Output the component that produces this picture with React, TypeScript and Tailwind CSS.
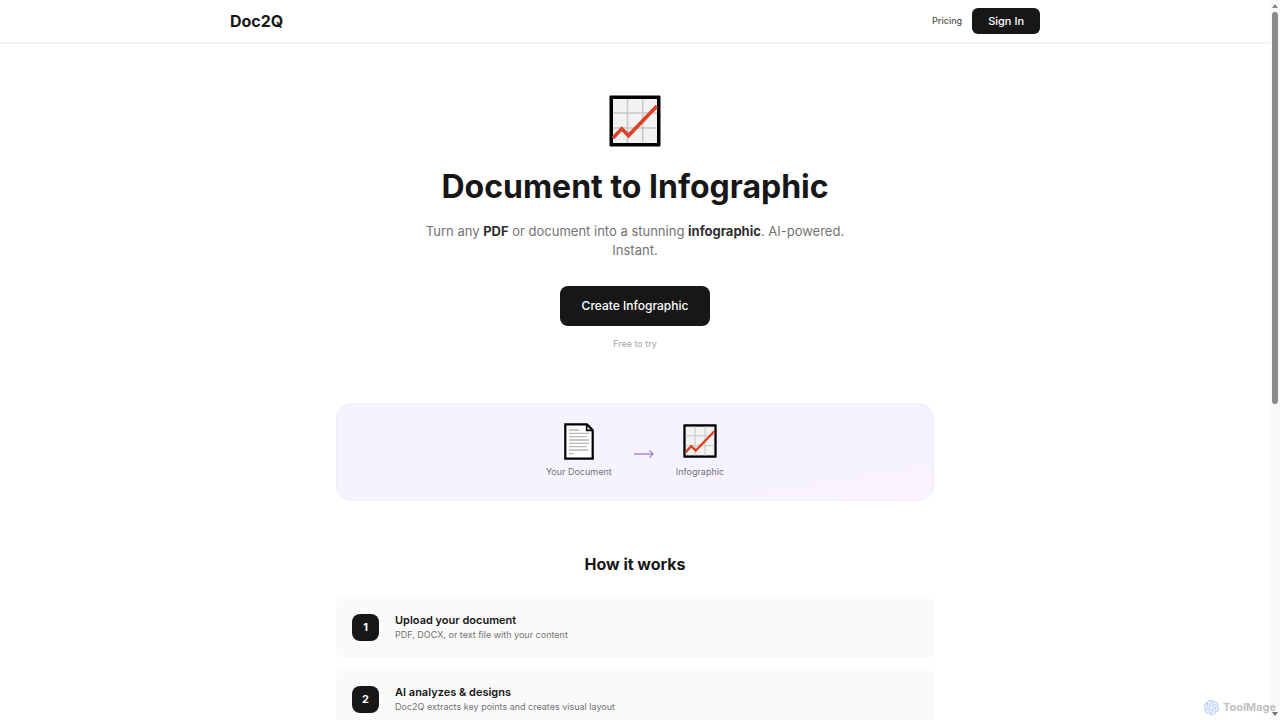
import { ReactNode } from 'react';
import { SiOpenai } from 'react-icons/si';

const steps = [
  { title: 'Upload your document', text: 'PDF, DOCX, or text file with your content' },
  { title: 'AI analyzes & designs', text: 'Doc2Q extracts key points and creates visual layout' },
];

function ChartIcon({ className }: { className: string }) {
  return (
    <svg viewBox="0 0 52 52" className={className} aria-hidden="true">
      <rect x="0.5" y="0.5" width="51" height="51" rx="1" fill="#000" />
      <rect x="4" y="4" width="44" height="44" fill="#f2f2f2" />
      <path d="M18.5 4v44M33.7 4v44M4 18h44M4 33h44" stroke="#c8c8c8" strokeWidth="1.6" />
      <path d="M4 43 12.7 33.8l6.8 6.8L48 11" fill="none" stroke="#da4327" strokeWidth="3.6" />
    </svg>
  );
}

function DocumentIcon({ className }: { className: string }) {
  return (
    <svg viewBox="0 0 30 37" className={className} aria-hidden="true">
      <path d="M1.3 1.3h21.6l5.8 5.8v28.6H1.3z" fill="#fff" stroke="#000" strokeWidth="2.2" />
      <path d="M22.7 1.8v5.6h5.6" fill="none" stroke="#000" strokeWidth="1.6" />
      <path
        d="M5 7h10M5 10.4h20M5 13.7h18M5 17h20M5 20.3h20M5 23.6h18M5 27h19M5 30.7h4.5"
        stroke="#b8b8b8"
        strokeWidth="1.3"
      />
    </svg>
  );
}

function Preview({ icon, label }: { icon: ReactNode; label: string }) {
  return (
    <div className="flex flex-col items-center gap-[3px]">
      <div className="flex h-10 items-center">{icon}</div>
      <span className="text-[9px] leading-4 text-[#737373]">{label}</span>
    </div>
  );
}

function Watermark() {
  return (
    <div className="absolute right-1 bottom-[5px] flex items-center gap-1 opacity-60">
      <SiOpenai
        className="size-[15px] overflow-visible stroke-[#8fb4f5] text-[#8fb4f5]"
        strokeWidth="0.6"
        aria-hidden="true"
      />
      <span className="text-[11px] leading-4 font-bold text-[#999]">ToolMage</span>
    </div>
  );
}

function ScrollTrack() {
  return (
    <div className="flex w-[10px] shrink-0 flex-col items-center bg-[#fafafa] py-1" aria-hidden="true">
      <svg viewBox="0 0 6 4" className="mb-1 h-1 w-[6px] shrink-0">
        <path d="M3 0 6 4H0z" fill="#858585" />
      </svg>
      <div className="h-[55%] w-[6px] rounded-full bg-[#8b8b8b]" />
      <svg viewBox="0 0 6 4" className="mt-auto h-1 w-[6px] shrink-0">
        <path d="M3 4 6 0H0z" fill="#707070" />
      </svg>
    </div>
  );
}

export default function App() {
  return (
    <div className="relative flex h-screen overflow-hidden bg-white font-[Inter,sans-serif] text-[#171717]">
      <div className="min-w-0 flex-1 overflow-hidden">
        {/* Header */}
        <header className="border-b-2 border-[#f3f3f3]">
          <div className="mx-auto flex max-w-[810px] items-center justify-between py-2">
            <a href="#" className="text-[16px] leading-5 font-bold">Doc2Q</a>
            <nav className="flex items-center gap-[10px]">
              <a href="#pricing" className="text-[9px] font-medium text-[#525252]">Pricing</a>
              <button className="rounded-md bg-[#171717] px-4 py-[5px] text-[11px] leading-4 font-medium text-white">
                Sign In
              </button>
            </nav>
          </div>
        </header>

        <main className="mx-auto max-w-[598px]">
          {/* Hero */}
          <section className="flex flex-col items-center pt-[51px] text-center">
            <ChartIcon className="size-[52px]" />
            <h1 className="mt-5 text-[32px] leading-10 font-bold">Document to Infographic</h1>
            <p className="mt-[15px] max-w-[450px] text-[13px] leading-[19px] text-[#737373]">
              Turn any <strong className="font-bold text-[#303030]">PDF</strong> or document into a stunning{' '}
              <strong className="font-bold text-[#303030]">infographic</strong>. AI-powered. Instant.
            </p>
            <button className="mt-[26px] rounded-lg bg-[#171717] px-[22px] py-[10px] text-[12px] leading-5 font-medium text-white">
              Create Infographic
            </button>
            <p className="mt-[10px] text-[9px] leading-4 text-[#a3a3a3]">Free to try</p>
          </section>

          {/* Conversion preview */}
          <section className="mt-[51px] flex items-center justify-center gap-[22px] rounded-2xl border border-[#f0ecfa] bg-linear-to-br from-[#f5f3ff] via-[#f6f3fe] via-75% to-[#fbf3fe] pt-[17px] pb-5">
            <Preview icon={<DocumentIcon className="h-[37px] w-[30px]" />} label="Your Document" />
            <svg viewBox="0 0 20 8" className="mt-[6px] h-2 w-5" fill="none" stroke="#a78be0" strokeWidth="1.4" aria-hidden="true">
              <path d="M0 4h19M15.5.5 19 4l-3.5 3.5" />
            </svg>
            <Preview icon={<ChartIcon className="size-[34px]" />} label="Infographic" />
          </section>

          {/* Steps */}
          <section className="mt-[51px]">
            <h2 className="text-center text-[16px] leading-6 font-bold">How it works</h2>
            <ol className="mt-[21px] flex flex-col gap-[11px]">
              {steps.map((step, i) => (
                <li key={step.title} className="flex items-center gap-4 rounded-lg bg-[#fafafa] p-4">
                  <span className="flex size-[27px] shrink-0 items-center justify-center rounded-lg bg-[#171717] text-[11px] font-bold text-white">
                    {i + 1}
                  </span>
                  <div>
                    <h3 className="text-[11px] leading-[15px] font-semibold">{step.title}</h3>
                    <p className="text-[9px] leading-[14px] text-[#737373]">{step.text}</p>
                  </div>
                </li>
              ))}
            </ol>
          </section>
        </main>
      </div>
      <ScrollTrack />
      <Watermark />
    </div>
  );
}
